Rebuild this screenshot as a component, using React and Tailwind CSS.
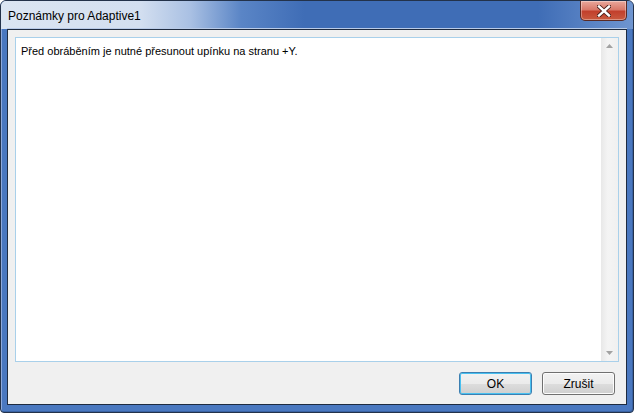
import { useState } from 'react';

function CloseButton() {
  return (
    <div className="absolute right-[6px] top-0 flex h-[20px] w-[47px] items-center justify-center rounded-b-[5px] border border-t-0 border-[#5a2a24] bg-[linear-gradient(to_bottom,#e9a89c_0%,#d9796a_45%,#c2402c_55%,#c95a3f_100%)] shadow-[inset_0_0_0_1px_rgba(255,255,255,0.35)]">
      <svg width="14" height="12" viewBox="0 0 14 12">
        <path
          d="M2 1.5 L12 10.5 M12 1.5 L2 10.5"
          stroke="#4a1f1a"
          strokeWidth="4.2"
          strokeLinecap="square"
          fill="none"
        />
        <path
          d="M2 1.5 L12 10.5 M12 1.5 L2 10.5"
          stroke="#ffffff"
          strokeWidth="2.4"
          strokeLinecap="square"
          fill="none"
        />
      </svg>
    </div>
  );
}

function Arrow({ up }) {
  return (
    <svg width="7" height="4" viewBox="0 0 7 4">
      <path d={up ? 'M0 4 L3.5 0 L7 4 Z' : 'M0 0 L3.5 4 L7 0 Z'} fill="#a2a2a2" />
    </svg>
  );
}

function Button({ children, primary }) {
  return (
    <button
      className={
        primary
          ? 'flex h-[23px] w-[73px] items-center justify-center rounded-[3px] border border-[#3c7fb1] bg-[linear-gradient(to_bottom,#f2f2f2_0%,#ebebeb_50%,#dddddd_51%,#cfcfcf_100%)] text-[12px] text-black shadow-[inset_0_0_0_1px_#48c0f0] outline-none'
          : 'flex h-[23px] w-[73px] items-center justify-center rounded-[3px] border border-[#707070] bg-[linear-gradient(to_bottom,#f2f2f2_0%,#ebebeb_50%,#dddddd_51%,#cfcfcf_100%)] text-[12px] text-black shadow-[inset_0_0_0_1px_#fcfcfc] outline-none'
      }
    >
      {children}
    </button>
  );
}

export default function App() {
  const [note] = useState('Před obráběním je nutné přesunout upínku na stranu +Y.');

  return (
    <div className="relative flex h-[413px] w-[634px] flex-col overflow-hidden rounded-t-[6px] rounded-b-[4px] border border-[#23324a] bg-[#4a78c0] font-['Liberation_Sans',Arial,sans-serif] shadow-[inset_1px_1px_0_#8eaadc,inset_-1px_-1px_0_#3a62a3]">
      {/* title bar */}
      <div className="flex h-[28px] shrink-0 items-center bg-[linear-gradient(to_right,#dbe5f2_0%,#d3dff0_22%,#a9c0e3_30%,#5a85c6_38%,#3f6db6_48%,#3f6db6_85%,#6f95d0_100%)] pl-[7px] pt-[1px]">
        <span className="text-[12px] text-black">Poznámky pro Adaptive1</span>
      </div>
      <CloseButton />

      {/* client */}
      <div className="mx-[6px] mb-[7px] flex flex-1 flex-col border border-[#1e2b40] bg-[#f0f0f0] shadow-[0_-1px_0_#b9cbe8] px-[7px] pt-[7px] pb-[9px]">
        <div className="flex flex-1 border border-[#a9d0ea] bg-white">
          <div className="flex-1 pl-[5px] pt-[6px] text-[11px] leading-[14px] text-black">{note}</div>
          <div className="flex w-[17px] flex-col items-center justify-between bg-[linear-gradient(to_right,#e8e8e8,#f4f4f4_40%,#f0f0f0)] py-[6px]">
            <Arrow up />
            <Arrow />
          </div>
        </div>
        <div className="mt-[10px] flex justify-end gap-[10px] pr-[4px]">
          <Button primary>OK</Button>
          <Button>Zrušit</Button>
        </div>
      </div>
    </div>
  );
}
